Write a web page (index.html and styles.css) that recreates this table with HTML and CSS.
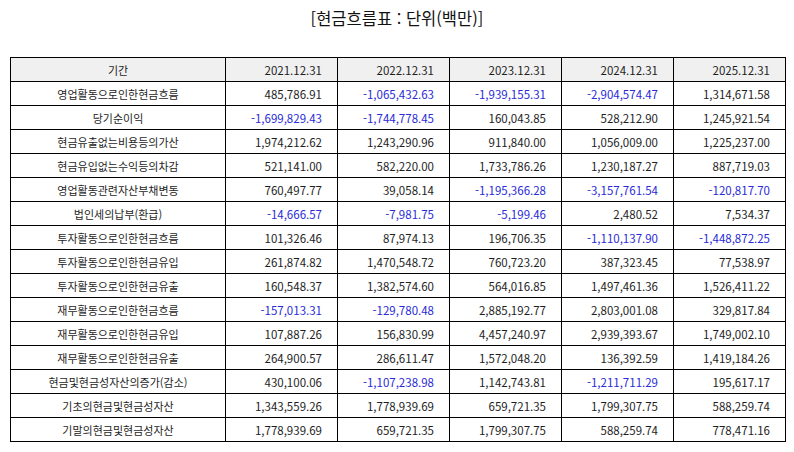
FILE: index.html
```html
<!DOCTYPE html>
<html lang="ko">
<head>
<meta charset="utf-8">
<link rel="stylesheet" href="styles.css">
</head>
<body>
<div class="page">
  <h1 class="title">[현금흐름표 : 단위(백만)]</h1>
  <table class="cf">
    <colgroup>
      <col class="c-label"><col class="c-num"><col class="c-num"><col class="c-num"><col class="c-num"><col class="c-num">
    </colgroup>
    <thead>
      <tr><th class="lbl">기간</th><th>2021.12.31</th><th>2022.12.31</th><th>2023.12.31</th><th>2024.12.31</th><th>2025.12.31</th></tr>
    </thead>
    <tbody>
      <tr><td class="lbl">영업활동으로인한현금흐름</td><td>485,786.91</td><td class="neg">-1,065,432.63</td><td class="neg">-1,939,155.31</td><td class="neg">-2,904,574.47</td><td>1,314,671.58</td></tr>
      <tr><td class="lbl">당기순이익</td><td class="neg">-1,699,829.43</td><td class="neg">-1,744,778.45</td><td>160,043.85</td><td>528,212.90</td><td>1,245,921.54</td></tr>
      <tr><td class="lbl">현금유출없는비용등의가산</td><td>1,974,212.62</td><td>1,243,290.96</td><td>911,840.00</td><td>1,056,009.00</td><td>1,225,237.00</td></tr>
      <tr><td class="lbl">현금유입없는수익등의차감</td><td>521,141.00</td><td>582,220.00</td><td>1,733,786.26</td><td>1,230,187.27</td><td>887,719.03</td></tr>
      <tr><td class="lbl">영업활동관련자산부채변동</td><td>760,497.77</td><td>39,058.14</td><td class="neg">-1,195,366.28</td><td class="neg">-3,157,761.54</td><td class="neg">-120,817.70</td></tr>
      <tr><td class="lbl">법인세의납부(환급)</td><td class="neg">-14,666.57</td><td class="neg">-7,981.75</td><td class="neg">-5,199.46</td><td>2,480.52</td><td>7,534.37</td></tr>
      <tr><td class="lbl">투자활동으로인한현금흐름</td><td>101,326.46</td><td>87,974.13</td><td>196,706.35</td><td class="neg">-1,110,137.90</td><td class="neg">-1,448,872.25</td></tr>
      <tr><td class="lbl">투자활동으로인한현금유입</td><td>261,874.82</td><td>1,470,548.72</td><td>760,723.20</td><td>387,323.45</td><td>77,538.97</td></tr>
      <tr><td class="lbl">투자활동으로인한현금유출</td><td>160,548.37</td><td>1,382,574.60</td><td>564,016.85</td><td>1,497,461.36</td><td>1,526,411.22</td></tr>
      <tr><td class="lbl">재무활동으로인한현금흐름</td><td class="neg">-157,013.31</td><td class="neg">-129,780.48</td><td>2,885,192.77</td><td>2,803,001.08</td><td>329,817.84</td></tr>
      <tr><td class="lbl">재무활동으로인한현금유입</td><td>107,887.26</td><td>156,830.99</td><td>4,457,240.97</td><td>2,939,393.67</td><td>1,749,002.10</td></tr>
      <tr><td class="lbl">재무활동으로인한현금유출</td><td>264,900.57</td><td>286,611.47</td><td>1,572,048.20</td><td>136,392.59</td><td>1,419,184.26</td></tr>
      <tr><td class="lbl">현금및현금성자산의증가(감소)</td><td>430,100.06</td><td class="neg">-1,107,238.98</td><td>1,142,743.81</td><td class="neg">-1,211,711.29</td><td>195,617.17</td></tr>
      <tr><td class="lbl">기초의현금및현금성자산</td><td>1,343,559.26</td><td>1,778,939.69</td><td>659,721.35</td><td>1,799,307.75</td><td>588,259.74</td></tr>
      <tr><td class="lbl">기말의현금및현금성자산</td><td>1,778,939.69</td><td>659,721.35</td><td>1,799,307.75</td><td>588,259.74</td><td>778,471.16</td></tr>
    </tbody>
  </table>
</div>
</body>
</html>
```

FILE: styles.css
```css
html, body {
  margin: 0;
  padding: 0;
  background: #ffffff;
}

.page {
  width: 794px;
  font-family: "Noto Sans CJK KR", "Noto Sans", sans-serif;
  color: #111111;
}

.title {
  margin: 8px 0 0 0;
  font-size: 16.5px;
  line-height: 20px;
  font-weight: normal;
  text-align: center;
  color: #111111;
}

.cf {
  margin: 29px 0 0 10px;
  border-collapse: collapse;
  table-layout: fixed;
  width: 776px;
}

.c-label { width: 215px; }
.c-num { width: 112px; }

.cf th,
.cf td {
  border: 1px solid #000000;
  height: 23px;
  padding: 0 15px 0 4px;
  font-size: 11.5px;
  font-weight: normal;
  text-align: right;
  white-space: nowrap;
  line-height: 14px;
  color: #1e1e1e;
}

.cf thead th {
  background: #f0f0f0;
}

.cf .lbl {
  text-align: center;
  padding: 0 4px;
  font-size: 11px;
}

.cf .neg {
  color: #2a2ad8;
}
```
